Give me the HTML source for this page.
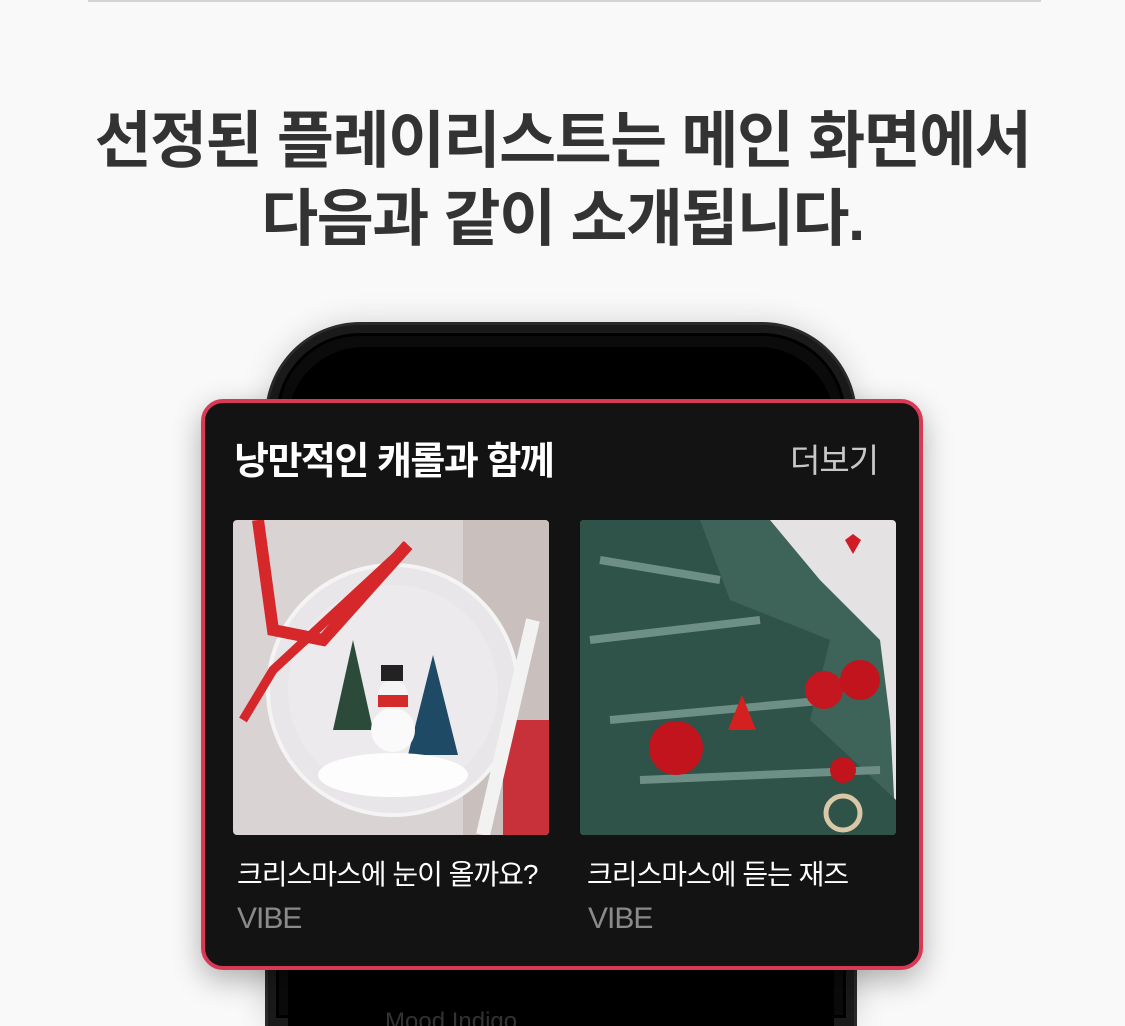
<!DOCTYPE html>
<html style="overflow:hidden"><head><meta charset="utf-8">
<style>
*{margin:0;padding:0;box-sizing:border-box}
html,body{width:1125px;height:1026px;overflow:hidden}
body{background:#f9f9f9;position:relative;font-family:"Liberation Sans","Noto Sans CJK KR",sans-serif}
.topline{position:absolute;left:88px;top:0;width:953px;height:2px;background:#d4d4d4}
.h{position:absolute;left:0;width:1125px;text-align:center;font-size:62px;line-height:62px;font-weight:700;color:#333;letter-spacing:-1.5px}
.phone{position:absolute;left:265px;top:322px;width:592px;height:704px;border-radius:95px 95px 0 0;background:#0b0b0b;border:3px solid #2a2a2a;border-bottom:none;box-shadow:0 0 30px rgba(0,0,0,.15), inset 0 0 0 8px #1a1a1a, inset 0 0 0 11px #000}
.phone .scr{position:absolute;left:20px;top:22px;right:20px;bottom:0;background:#000;border-radius:75px 75px 0 0}
.mi{position:absolute;left:385px;top:1008px;color:#333;font-size:24px}
.card{position:absolute;left:201px;top:399px;width:722px;height:571px;border:4px solid #d83a56;border-radius:22px;background:#131313;box-shadow:0 10px 30px rgba(0,0,0,.3)}
.t{position:absolute;left:234px;top:430px;color:#fff;font-size:38px;font-weight:700;letter-spacing:-1.5px}
.more{position:absolute;left:790px;top:434px;color:#c8c8c8;font-size:33px;letter-spacing:-1px}
.img{position:absolute;top:520px;width:316px;height:315px;border-radius:4px;overflow:hidden}
.cap{position:absolute;top:853px;color:#fff;font-size:28px;letter-spacing:-1px}
.v{position:absolute;top:902px;color:#8a8a8a;font-size:30px;letter-spacing:-1px}
</style></head><body>
<div class="topline"></div>
<div class="h" style="top:111px">선정된 플레이리스트는 메인 화면에서</div>
<div class="h" style="top:189px">다음과 같이 소개됩니다.</div>
<div class="phone"><div class="scr"></div></div>
<div class="mi">Mood Indigo</div>
<div class="card"></div>
<div class="t">낭만적인 캐롤과 함께</div>
<div class="more">더보기</div>
<div class="img" style="left:233px">
<svg width="316" height="315" viewBox="0 0 316 315">
<rect width="316" height="315" fill="#d9d4d3"/>
<rect x="230" y="0" width="86" height="315" fill="#c9bfbd"/>
<rect x="270" y="200" width="46" height="115" fill="#c8303a"/>
<circle cx="160" cy="170" r="125" fill="#e8e6e8" stroke="#f4f4f4" stroke-width="4"/>
<circle cx="160" cy="170" r="105" fill="#eceaec"/>
<polygon points="120,120 100,210 140,210" fill="#2c4a3a"/>
<polygon points="200,135 175,235 225,235" fill="#1f4a66"/>
<circle cx="160" cy="210" r="22" fill="#fafafa"/>
<circle cx="160" cy="175" r="15" fill="#f4f4f4"/>
<rect x="148" y="145" width="22" height="16" fill="#222"/>
<rect x="145" y="175" width="30" height="12" fill="#d32a2a"/>
<ellipse cx="160" cy="255" rx="75" ry="22" fill="#fdfdfd"/>
<path d="M25,0 L40,110 L90,120 L175,25" stroke="#d6272a" stroke-width="12" fill="none"/>
<path d="M175,25 L40,150 L10,200" stroke="#d6272a" stroke-width="9" fill="none"/>
<path d="M300,100 L250,315" stroke="#f2f2f2" stroke-width="14"/>
</svg></div>
<div class="img" style="left:580px">
<svg width="316" height="315" viewBox="0 0 316 315">
<rect width="316" height="315" fill="#e4e2e3"/>
<path d="M0,0 L190,0 L240,60 L300,120 L310,200 L316,315 L0,315 Z" fill="#3e6358"/>
<path d="M0,0 L120,0 L150,80 L250,120 L230,200 L316,280 L316,315 L0,315 Z" fill="#2f5249"/>
<path d="M20,40 L140,60 M10,120 L180,100 M30,200 L250,180 M60,260 L300,250" stroke="#6e8f86" stroke-width="8"/>
<circle cx="96" cy="228" r="27" fill="#c2141c"/>
<circle cx="244" cy="170" r="19" fill="#c5171f"/>
<circle cx="280" cy="160" r="20" fill="#c2141c"/>
<circle cx="263" cy="250" r="13" fill="#c2141c"/>
<circle cx="263" cy="293" r="17" fill="none" stroke="#d8c8a8" stroke-width="5"/>
<polygon points="162,175 148,210 176,210" fill="#d52020"/>
<path d="M265,20 l8,-6 l8,6 l-8,14 z" fill="#d21c25"/>
</svg></div>
<div class="cap" style="left:237px">크리스마스에 눈이 올까요?</div>
<div class="cap" style="left:587px">크리스마스에 듣는 재즈</div>
<div class="v" style="left:237px">VIBE</div>
<div class="v" style="left:588px">VIBE</div>
</body></html>
